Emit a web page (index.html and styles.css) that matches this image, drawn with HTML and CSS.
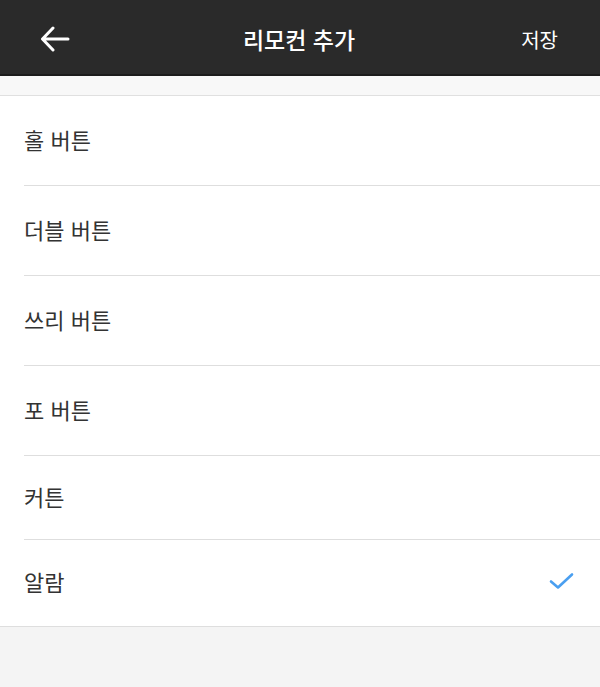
FILE: index.html
```html
<!DOCTYPE html>
<html lang="ko">
<head>
  <meta charset="UTF-8">
  <meta name="viewport" content="width=device-width, initial-scale=1.0">
  <title>리모컨 추가</title>
  <link rel="stylesheet" href="styles.css">
</head>
<body>
  <!-- 상단 바 -->
  <header class="topbar">
    <div class="back">
      <svg width="30" height="26" viewBox="0 0 30 26">
        <path d="M28 13H3M13 2L2.5 13L13 24" fill="none" stroke="#fff" stroke-width="3" stroke-linecap="round" stroke-linejoin="round"/>
      </svg>
    </div>
    <div class="title">리모컨 추가</div>
    <div class="save">저장</div>
  </header>

  <div class="gap"></div>

  <!-- 목록 -->
  <ul class="list">
    <li class="item">홀 버튼</li>
    <li class="item">더블 버튼</li>
    <li class="item">쓰리 버튼</li>
    <li class="item">포 버튼</li>
    <li class="item short">커튼</li>
    <li class="item last">알람
      <svg class="check" width="26" height="20" viewBox="0 0 26 20">
        <path d="M2 10.5L9 16.5L23 3.5" fill="none" stroke="#4a9ff0" stroke-width="2.6" stroke-linecap="round" stroke-linejoin="round"/>
      </svg>
    </li>
  </ul>
</body>
</html>
```

FILE: styles.css
```css
* {
  padding: 0;
  margin: 0;
  list-style: none;
  box-sizing: border-box;
}

body {
  width: 600px;
  height: 687px;
  background-color: #f4f4f4;
  font-family: "Noto Sans CJK KR", "Noto Sans", sans-serif;
}

.topbar {
  display: flex;
  align-items: center;
  justify-content: space-between;
  height: 76px;
  padding: 4px 42px 0 40px;
  background-color: #2a2a2a;
  border-bottom: 2px solid #1c1c1c;
  color: #fff;
}

.back {
  display: flex;
  width: 60px;
}

.title {
  font-size: 23px;
  font-weight: 500;
}

.save {
  width: 60px;
  text-align: right;
  font-size: 20px;
}

.gap {
  height: 20px;
  background-color: #f8f8f8;
  border-bottom: 1px solid #e0e0e0;
}

.list {
  background-color: #fff;
}

.item {
  display: flex;
  align-items: center;
  justify-content: space-between;
  position: relative;
  height: 90px;
  padding: 0 24px 4px;
  font-size: 22px;
  color: #333;
}

.item::after {
  content: "";
  position: absolute;
  left: 24px;
  right: 0;
  bottom: 0;
  height: 1px;
  background-color: #dedede;
}

.item.short {
  height: 84px;
}

.item.last {
  height: 87px;
  border-bottom: 1px solid #dedede;
}

.item.last::after {
  display: none;
}

.check {
  margin-right: 1px;
}
```
